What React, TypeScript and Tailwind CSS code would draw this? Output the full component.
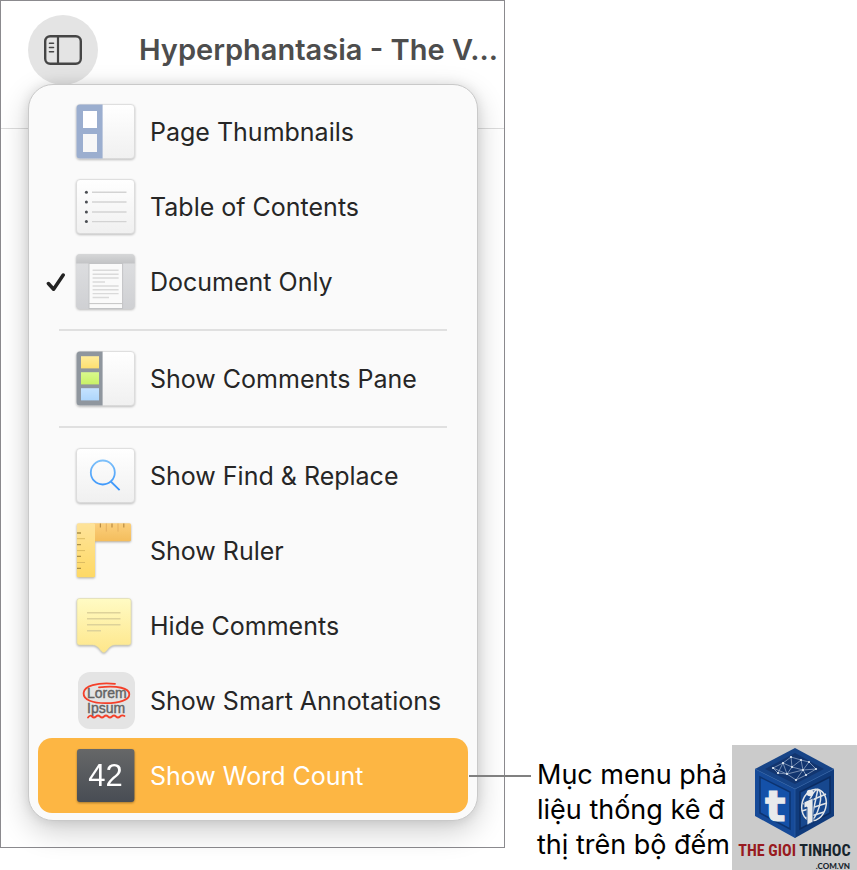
import type {ReactNode} from "react";
import clsx from "clsx";

function Tile({children, id}: { children?: ReactNode; id: string }) {
    return (
        <svg viewBox="0 0 60 60" className="h-[60px] w-[60px] shrink-0 drop-shadow-[0_1px_1px_rgba(0,0,0,0.25)]" aria-hidden="true">
            <defs>
                <linearGradient id={id} x1="0" y1="0" x2="0" y2="1">
                    <stop offset="0" stopColor="#ffffff" />
                    <stop offset="1" stopColor="#f0f0f0" />
                </linearGradient>
            </defs>
            <rect x="1.5" y="2.5" width="58" height="54" rx="3.5" fill={`url(#${id})`} stroke="#d9d9d9" strokeWidth="0.8" />
            {children}
        </svg>
    );
}

function ThumbnailsIcon() {
    return (
        <Tile id="tile-thumbs">
            <path d="M27.6 2.5H5A3.5 3.5 0 0 0 1.5 6V53A3.5 3.5 0 0 0 5 56.5H27.6Z" fill="#9baecf" />
            <rect x="8" y="9" width="14" height="17" fill="#fff" />
            <rect x="8" y="32" width="14" height="18" fill="#f7f7f7" />
        </Tile>
    );
}

function ContentsIcon() {
    return (
        <Tile id="tile-toc">
            {[15.2, 25, 35, 44.6].map((y) => (
                <g key={y}>
                    <circle cx="11.4" cy={y} r="1.5" fill="#4a4d52" />
                    <path d={`M17 ${y}H51.5`} stroke="#d3d3d3" strokeWidth="1.4" />
                </g>
            ))}
        </Tile>
    );
}

function DocumentIcon() {
    return (
        <svg viewBox="0 0 60 60" className="h-[60px] w-[60px] shrink-0 drop-shadow-[0_1px_1px_rgba(0,0,0,0.25)]" aria-hidden="true">
            <defs>
                <linearGradient id="doc-bar" x1="0" y1="0" x2="0" y2="1">
                    <stop offset="0" stopColor="#d6d7d8" />
                    <stop offset="1" stopColor="#c2c3c5" />
                </linearGradient>
                <linearGradient id="doc-side" x1="0" y1="0" x2="0" y2="1">
                    <stop offset="0" stopColor="#dfe0e2" />
                    <stop offset="1" stopColor="#cfd0d3" />
                </linearGradient>
            </defs>
            <rect x="1.2" y="2" width="58.6" height="55" rx="4" fill="url(#doc-side)" />
            <path d="M1.2 11.5V6A4 4 0 0 1 5.2 2H55.8A4 4 0 0 1 59.8 6V11.5Z" fill="url(#doc-bar)" />
            <rect x="14" y="11.5" width="33.6" height="45" fill="#fafafa" stroke="#c2c3c5" strokeWidth="1" />
            <path d="M14 51.6H47.6" stroke="#c4c4c4" strokeWidth="1" />
            <path
                d="M17.6 18.3H43.6M17.6 22.2H43.6M17.6 26H43.6M17.6 30H30M17.6 34H43.6M17.6 37.8H43.6M17.6 41.6H43.6M17.6 45.5H34"
                stroke="#dadada"
                strokeWidth="1.4"
            />
        </svg>
    );
}

function CommentsPaneIcon() {
    return (
        <Tile id="tile-pane">
            <defs>
                <linearGradient id="pane-yellow" x1="0" y1="0" x2="0" y2="1">
                    <stop offset="0" stopColor="#ffec9a" />
                    <stop offset="1" stopColor="#ffdf70" />
                </linearGradient>
                <linearGradient id="pane-green" x1="0" y1="0" x2="0" y2="1">
                    <stop offset="0" stopColor="#d9f88d" />
                    <stop offset="1" stopColor="#c9f266" />
                </linearGradient>
                <linearGradient id="pane-blue" x1="0" y1="0" x2="0" y2="1">
                    <stop offset="0" stopColor="#c5e3ff" />
                    <stop offset="1" stopColor="#aed6fc" />
                </linearGradient>
            </defs>
            <path d="M27.6 2.5H5A3.5 3.5 0 0 0 1.5 6V53A3.5 3.5 0 0 0 5 56.5H27.6Z" fill="#8f969e" />
            <rect x="6" y="7.2" width="18" height="12.2" fill="url(#pane-yellow)" />
            <rect x="6" y="23.2" width="18" height="12.2" fill="url(#pane-green)" />
            <rect x="6" y="39.2" width="18" height="12.2" fill="url(#pane-blue)" />
        </Tile>
    );
}

function FindIcon() {
    return (
        <Tile id="tile-find">
            <defs>
                <linearGradient id="lens" x1="0" y1="0" x2="0" y2="1">
                    <stop offset="0" stopColor="#7dc0fa" />
                    <stop offset="1" stopColor="#3391fb" />
                </linearGradient>
            </defs>
            <path d="M39.8 26.5A12 12 0 1 1 15.8 26.5A12 12 0 1 1 39.8 26.5ZM35.8 35.5L44.6 44.2" fill="none" stroke="url(#lens)" strokeWidth="1.8" />
        </Tile>
    );
}

function RulerIcon() {
    return (
        <svg viewBox="0 0 60 60" className="h-[60px] w-[60px] shrink-0 drop-shadow-[0_1px_1px_rgba(0,0,0,0.3)]" aria-hidden="true">
            <defs>
                <linearGradient id="ruler-h" x1="0" y1="0" x2="0" y2="1">
                    <stop offset="0" stopColor="#fbcf7c" />
                    <stop offset="1" stopColor="#f4bd5c" />
                </linearGradient>
                <linearGradient id="ruler-v" x1="0" y1="0" x2="0" y2="1">
                    <stop offset="0" stopColor="#fee39a" />
                    <stop offset="1" stopColor="#fed965" />
                </linearGradient>
            </defs>
            <path d="M15 2.3H54.5A1.5 1.5 0 0 1 56 3.8V18.8A1.5 1.5 0 0 1 54.5 20.3H15Z" fill="url(#ruler-h)" />
            <rect x="1.8" y="2.3" width="18.2" height="54" rx="1.5" fill="url(#ruler-v)" />
            <path d="M25.4 2.5V6.6M37 2.5V6.6M48.8 2.5V6.6" stroke="#b98d45" strokeWidth="1.2" />
            <path d="M31.3 2.5V10.6M43 2.5V10.6" stroke="#e5b060" strokeWidth="1" />
            <path d="M2 12H6M2 23.6H6M2 35.4H6M2 47.4H6" stroke="#ad9146" strokeWidth="1.4" />
            <path d="M2 17.7H10M2 29.6H10M2 41.5H10" stroke="#dcbc62" strokeWidth="1" />
        </svg>
    );
}

function NoteIcon() {
    return (
        <svg viewBox="0 0 60 60" className="h-[60px] w-[60px] shrink-0 drop-shadow-[0_1px_1px_rgba(0,0,0,0.3)]" aria-hidden="true">
            <defs>
                <linearGradient id="note" x1="0" y1="0" x2="0" y2="1">
                    <stop offset="0" stopColor="#fffbc4" />
                    <stop offset="1" stopColor="#fee68a" />
                </linearGradient>
            </defs>
            <path
                d="M4.5 2.5H53.5A2.5 2.5 0 0 1 56 5V46.5A2.5 2.5 0 0 1 53.5 49H40C33.5 49 32 56.5 28.8 56.5C25.6 56.5 24 49 17.5 49H4.5A2.5 2.5 0 0 1 2 46.5V5A2.5 2.5 0 0 1 4.5 2.5Z"
                fill="url(#note)"
                stroke="#dcd8ac"
                strokeWidth="0.6"
            />
            <path d="M12 16.8H45.5M12 22.7H45.5M12 28.7H45.5M12 34.7H26" stroke="#ddd29a" strokeWidth="1.4" />
        </svg>
    );
}

function AnnotationsIcon() {
    return (
        <svg viewBox="0 0 60 60" className="h-[60px] w-[60px] shrink-0" aria-hidden="true">
            <rect x="3" y="1" width="57" height="57" rx="12" fill="#e4e4e4" />
            <g fill="#636363" stroke="#636363" strokeWidth="0.4" fontFamily="'Liberation Sans', sans-serif" fontSize="14">
                <text x="12" y="27">Lorem</text>
                <text x="12" y="42">Ipsum</text>
            </g>
            <g fill="none" stroke="#f4402a" strokeWidth="1.8" strokeLinecap="round">
                <path d="M40 12.8C22 11 9 15 8.6 22C8.2 29 18 32.3 31 32.2C44 32.1 54.5 29 54.3 23.2C54 17 43 14.5 24 16.3" />
                <path d="M13 46.5Q15 43.5 17 45.5T21 45.5T25 45.5T29 45.5T33 45.5T37 45.5T41 45.5T45 45.5T49.5 45" />
            </g>
        </svg>
    );
}

function WordCountIcon() {
    return (
        <svg viewBox="0 0 60 60" className="h-[60px] w-[60px] shrink-0 drop-shadow-[0_1px_1px_rgba(0,0,0,0.35)]" aria-hidden="true">
            <defs>
                <linearGradient id="count" x1="0" y1="0" x2="0" y2="1">
                    <stop offset="0" stopColor="#666768" />
                    <stop offset="1" stopColor="#484d54" />
                </linearGradient>
            </defs>
            <rect x="2" y="3" width="57.4" height="53" rx="3" fill="url(#count)" />
            <text x="30.5" y="40" textAnchor="middle" fill="#fff" fontFamily="'Liberation Sans', sans-serif" fontSize="31">42</text>
        </svg>
    );
}

function SidebarIcon() {
    return (
        <svg viewBox="0 0 38 30" className="h-[30px] w-[38px]" fill="none" stroke="#454545" aria-hidden="true">
            <rect x="1.2" y="1.2" width="35.6" height="27.6" rx="5" strokeWidth="2.4" />
            <path d="M14 1V29" strokeWidth="2.2" />
            <path d="M5.5 8.2H9.5M5.5 12.5H9.5M5.5 16.7H9.5" strokeWidth="1.6" strokeLinecap="round" />
        </svg>
    );
}

type Item = {
    label: string;
    icon: ReactNode;
    checked?: boolean;
    active?: boolean;
};

const groups: Item[][] = [
    [
        {label: "Page Thumbnails", icon: <ThumbnailsIcon />},
        {label: "Table of Contents", icon: <ContentsIcon />},
        {label: "Document Only", icon: <DocumentIcon />, checked: true},
    ],
    [{label: "Show Comments Pane", icon: <CommentsPaneIcon />}],
    [
        {label: "Show Find & Replace", icon: <FindIcon />},
        {label: "Show Ruler", icon: <RulerIcon />},
        {label: "Hide Comments", icon: <NoteIcon />},
        {label: "Show Smart Annotations", icon: <AnnotationsIcon />},
        {label: "Show Word Count", icon: <WordCountIcon />, active: true},
    ],
];

function MenuItem({label, icon, checked, active}: Item) {
    return (
        <button
            type="button"
            className={clsx(
                "flex h-[75px] w-full items-center rounded-[14px] pl-2 text-left text-[25px] whitespace-nowrap",
                active ? "bg-[#fdb643] text-white" : "text-[#262626]"
            )}
        >
            <span className="w-[29px] shrink-0">
                {checked && (
                    <svg viewBox="0 0 20 20" className="h-5 w-5" fill="none" stroke="#222" strokeWidth="3.5" strokeLinecap="round" strokeLinejoin="round" aria-hidden="true">
                        <path d="M2.4 11.5L7.6 17.2L17.2 3" />
                    </svg>
                )}
            </span>
            {icon}
            <span className="pt-0.5 pl-[15px]">{label}</span>
        </button>
    );
}

function ViewMenu() {
    return (
        <nav className="relative -mt-[45px] mr-[26px] mb-[26px] ml-[27px] rounded-[25px] border border-[#c9c9c9] bg-[#fafafa] px-[9px] pt-[9px] pb-[7px] shadow-[0_10px_30px_rgba(0,0,0,0.2),0_0_12px_rgba(0,0,0,0.1)]">
            {groups.map((items, i) => (
                <div key={items[0].label}>
                    {i > 0 && (
                        <div className="flex h-[22px] items-center px-[21px]">
                            <hr className="w-full border-t-2 border-[#e0e0e0]" />
                        </div>
                    )}
                    {items.map((item) => <MenuItem key={item.label} {...item} />)}
                </div>
            ))}
        </nav>
    );
}

function Watermark() {
    return (
        <div className="absolute right-0 bottom-0 flex h-[125px] w-[125px] flex-col items-center bg-[#cbcbcb]">
            <svg viewBox="0 0 82 92" className="mt-[2px] h-[92px] w-[82px] shrink-0" aria-hidden="true">
                <path d="M41 1L80 22L41 42L1 22Z" fill="#174487" />
                <path d="M1 22L41 42V91L1 69Z" fill="#164a98" />
                <path d="M80 22L41 42V91L80 69Z" fill="#103b7c" />
                <path d="M41 6L70 22L41 37L11 22Z" fill="#12356f" />
                <path d="M6 30L36 45V82L6 66Z" fill="#1451a9" stroke="#0d3470" strokeWidth="1.5" />
                <path d="M76 30L46 45V82L76 66Z" fill="#17488f" stroke="#0b2c62" strokeWidth="1.5" />
                <path d="M1 22L41 42L80 22M41 42V91" fill="none" stroke="#2a5ca2" strokeWidth="0.8" />
                <g fill="none" stroke="#b8c8dd" strokeWidth="0.6">
                    <path d="M19 21L29 16L37 10L47 13L55 15L62 22L52 28L42 33L33 27L24 26ZM29 16L33 27L38 20L47 13L49 23L42 33M38 20L49 23L55 15M29 16L38 20L37 10M19 21L33 27L49 23L62 22M24 26L29 16M49 23L52 28" />
                </g>
                <g fill="#e4ebf3">
                    {[[19, 21], [29, 16], [37, 10], [47, 13], [55, 15], [62, 22], [52, 28], [42, 33], [33, 27], [24, 26], [38, 20], [49, 23]].map(([x, y]) => (
                        <circle key={`${x}-${y}`} cx={x} cy={y} r="1.1" />
                    ))}
                </g>
                <g fill="none" stroke="#e2e5e8" strokeWidth="1.5">
                    <ellipse cx="60" cy="58" rx="12" ry="16" transform="rotate(15 60 58)" />
                    <ellipse cx="60" cy="58" rx="5.5" ry="16" transform="rotate(15 60 58)" />
                    <path d="M64 42L57 74M49 57L72 47M48 64L73 56M51 71L70 65" />
                </g>
                <path d="M50 55L59 51V75L53 78V60L50 61Z" fill="#e8eaec" stroke="#154589" strokeWidth="0.8" />
                <circle cx="56" cy="46" r="3.3" fill="#e8eaec" />
                <text x="11" y="74" fill="#e8eaec" stroke="#e8eaec" fontFamily="'DejaVu Sans', sans-serif" fontWeight="700" fontSize="43">t</text>
            </svg>
            <p className="pt-px font-['Roboto_Condensed','Liberation_Sans_Narrow','Open_Sans_Condensed','DejaVu_Sans_Condensed',sans-serif] text-[16px] leading-[22px] font-bold whitespace-nowrap text-[#17252e]">
                <span className="text-[#981a20]">THE GIOI</span> TINHOC
            </p>
            <p className="self-end pr-[7px] font-[Lato,sans-serif] text-[8px] leading-[8px] font-black text-[#17252e]">.COM.VN</p>
        </div>
    );
}

export default function App() {
    return (
        <main className="relative grid min-h-screen grid-cols-[505fr_352fr] items-start overflow-hidden bg-white font-[Inter,sans-serif]">
            <section className="border border-[#8b8a8e] bg-white">
                <header className="flex h-32 items-start gap-[41px] border-b border-[#dcdcdc] pt-[14px] pl-[27px]">
                    <button type="button" aria-label="View" className="flex h-[70px] w-[70px] shrink-0 items-center justify-center rounded-full bg-[#e4e4e4]">
                        <SidebarIcon />
                    </button>
                    <h1 className="text-[29px] leading-[70px] font-semibold whitespace-nowrap text-[#4d4d4d]">Hyperphantasia - The V...</h1>
                </header>
                <ViewMenu />
            </section>
            <aside className="relative mb-2 self-end pl-8 text-[27px] leading-[35px] whitespace-nowrap text-black">
                <span className="absolute top-[18px] -left-9 h-[2px] w-[62px] bg-[#808080]" />
                <p>Mục menu phả</p>
                <p>liệu thống kê đ</p>
                <p>thị trên bộ đếm</p>
            </aside>
            <Watermark />
        </main>
    );
}
